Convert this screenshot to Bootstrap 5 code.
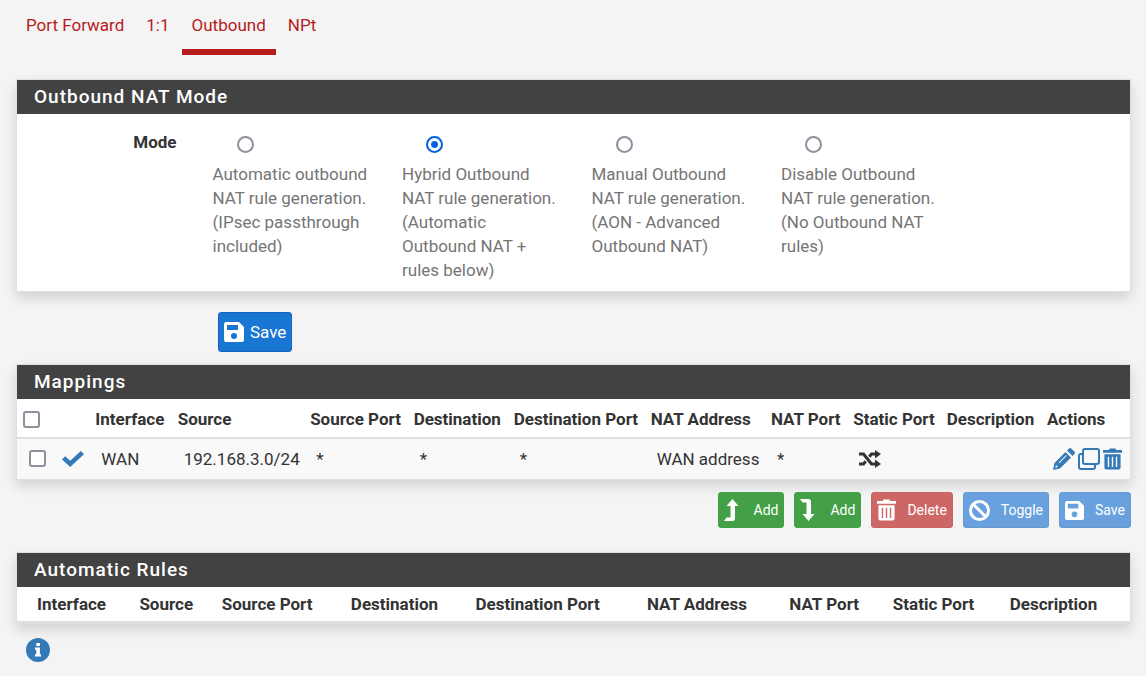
<!DOCTYPE html>
<html lang="en">
<head>
<meta charset="utf-8">
<meta name="viewport" content="width=device-width, initial-scale=1">
<title>Firewall: NAT: Outbound</title>
<link href="https://cdn.jsdelivr.net/npm/bootstrap@5.3.0/dist/css/bootstrap.min.css" rel="stylesheet">
<style>
  body { background: #f4f4f4; color: #333; font: 400 17px/24px Roboto, sans-serif; }
  .page { padding: 0 15px 0 16px; }
  .nat-tabs { margin-bottom: 24px; }
  .nat-tabs .nav-link { color: #b71c1c; padding: 13px 10px 12px; margin-right: 2px; line-height: 24px; border-bottom: 6px solid transparent; font-size: 17px; }
  .nat-tabs .nav-link.active { border-bottom-color: #b71c1c; }
  .panel { background: #fff; border: 1px solid #e0e0e0; box-shadow: 0 6px 12px rgba(0,0,0,.14); }
  .panel-title { background: #424242; color: #fff; font-size: 19px; font-weight: 500; line-height: 24px; letter-spacing: 1px; padding: 5px 17px; margin: 0; }
  input[type=radio], input[type=checkbox] { appearance: none; width: 17px; height: 17px; border: 2px solid #8f8f9d; background: #fff; margin: 0; flex: none; }
  input[type=radio] { border-radius: 50%; }
  input[type=checkbox] { border-radius: 3px; display: block; }
  input[type=radio]:checked { border-color: #0060df; background: radial-gradient(circle, #0060df 3px, #fff 4px); }
  .mode-body { padding: 16px 6px 9px; }
  .mode-body .row { --bs-gutter-x: 36px; }
  .mode-name { font-weight: 700; text-align: right; }
  .mode-option input[type=radio] { display: block; margin: 6px 0 9px 24px; }
  .mode-option label { color: #757575; display: block; margin-right: -6px; }
  svg { display: block; flex: none; }
  .save-row { margin: 20px 0 12px 202px; }
  .btn { --bs-btn-color: #fff; --bs-btn-hover-color: #fff; border-radius: 3px; display: inline-flex; align-items: center; }
  .btn-main { background: #1976d2; border: 1px solid #1565c0; padding: 7px 5px; font-size: 17px; line-height: 24px; gap: 6px; }
  .btn-row { background: #43a047; border: 1px solid #43a047; padding: 6px 5px; font-size: 14px; line-height: 20px; gap: 11px; }
  .btn-row.is-blue { background: #68a1de; border-color: #6899cc; }
  .btn-row.is-red { background: #cd6766; border-color: #c96362; }
  .row-actions { gap: 10px; margin: 12px 0 24px; }
  .rules { table-layout: fixed; width: 100%; white-space: nowrap; line-height: 24px; }
  .rules th { padding: 8px 6px 6px; font-weight: 700; border-bottom: 2px solid #e0e0e0; }
  .rules td { padding: 7px 12px 8px; background: #f9f9f9; height: 41px; }
  .mappings col:nth-child(1) { width: 3.5%; }
  .mappings col:nth-child(2) { width: 3%; }
  .mappings col:nth-child(3) { width: 7.4%; }
  .mappings col:nth-child(4) { width: 11.9%; }
  .mappings col:nth-child(5) { width: 9.3%; }
  .mappings col:nth-child(6) { width: 9%; }
  .mappings col:nth-child(7) { width: 12.3%; }
  .mappings col:nth-child(8) { width: 10.8%; }
  .mappings col:nth-child(9) { width: 7.4%; }
  .mappings col:nth-child(10) { width: 8.4%; }
  .mappings col:nth-child(11) { width: 9%; }
  .mappings .state { padding-left: 6px; padding-right: 0; }
  .icon-set { gap: 3px; }
  .rules.automatic th { padding: 5px 0 5px 20px; }
  .automatic col:nth-child(1) { width: 9.2%; }
  .automatic col:nth-child(2) { width: 7.4%; }
  .automatic col:nth-child(3) { width: 11.6%; }
  .automatic col:nth-child(4) { width: 11.2%; }
  .automatic col:nth-child(5) { width: 15.4%; }
  .automatic col:nth-child(6) { width: 12.8%; }
  .automatic col:nth-child(7) { width: 9.3%; }
  .automatic col:nth-child(8) { width: 10.5%; }
  .tool { color: #337ab7; }
  .info-link { display: inline-block; margin: 14px 0 12px 10px; }
</style>
</head>
<body>
<svg class="d-none" aria-hidden="true">
  <symbol id="i-save" viewBox="0 0 20 20"><path fill="currentColor" fill-rule="evenodd" d="M2 0h13l5 5v13a2 2 0 0 1-2 2H2a2 2 0 0 1-2-2V2a2 2 0 0 1 2-2zM3 3v5h11V3zM10 11a3 3 0 1 0 0 6a3 3 0 0 0 0-6z"/></symbol>
  <symbol id="i-trash" viewBox="0 0 20 22"><path fill="currentColor" fill-rule="evenodd" d="M7 0h6l1 1.500h6v3H0v-3h6zM1.500 6h17v14a2 2 0 0 1-2 2h-13a2 2 0 0 1-2-2zM5 8.500v11h1.500v-11zM9.250 8.500v11h1.500v-11zM13.500 8.500v11H15v-11z"/></symbol>
</svg>
<main class="page">
  <ul class="nav nat-tabs">
    <li class="nav-item"><a class="nav-link" href="#">Port Forward</a></li>
    <li class="nav-item"><a class="nav-link" href="#">1:1</a></li>
    <li class="nav-item"><a class="nav-link active" aria-current="page" href="#">Outbound</a></li>
    <li class="nav-item"><a class="nav-link" href="#">NPt</a></li>
  </ul>

  <form>
    <section class="panel">
      <h2 class="panel-title">Outbound NAT Mode</h2>
      <div class="mode-body">
        <div class="row" role="radiogroup" aria-labelledby="mode">
          <div class="col-2 mode-name" id="mode">Mode</div>
          <div class="col-2 mode-option"><input type="radio" name="mode" id="m1"><label for="m1">Automatic outbound NAT rule generation.<br>(IPsec passthrough included)</label></div>
          <div class="col-2 mode-option"><input type="radio" name="mode" id="m2" checked><label for="m2">Hybrid Outbound NAT rule generation.<br>(Automatic Outbound NAT + rules below)</label></div>
          <div class="col-2 mode-option"><input type="radio" name="mode" id="m3"><label for="m3">Manual Outbound NAT rule generation.<br>(AON - Advanced Outbound NAT)</label></div>
          <div class="col-2 mode-option"><input type="radio" name="mode" id="m4"><label for="m4">Disable Outbound NAT rule generation.<br>(No Outbound NAT rules)</label></div>
        </div>
      </div>
    </section>
    <div class="save-row">
      <button type="button" class="btn btn-main"><svg width="20" height="20"><use href="#i-save"/></svg>Save</button>
    </div>
  </form>

  <form>
    <section class="panel">
      <h2 class="panel-title">Mappings</h2>
      <table class="rules mappings">
        <colgroup><col><col><col><col><col><col><col><col><col><col><col><col></colgroup>
        <thead>
          <tr>
            <th><input type="checkbox" aria-label="Select all"></th><th></th><th>Interface</th><th>Source</th><th>Source Port</th><th>Destination</th><th>Destination Port</th><th>NAT Address</th><th>NAT Port</th><th>Static Port</th><th>Description</th><th>Actions</th>
          </tr>
        </thead>
        <tbody>
          <tr>
            <td><input type="checkbox" aria-label="Select rule"></td>
            <td class="state"><a class="tool" href="#" aria-label="Enabled"><svg width="22" height="16" viewBox="0 0 22 16"><path fill="currentColor" d="M0 8.500 3.200 5.300 8.200 9.800 18.800 0 22 3.200 8.200 16z"/></svg></a></td>
            <td>WAN</td><td>192.168.3.0/24</td><td>*</td><td>*</td><td>*</td><td>WAN address</td><td>*</td>
            <td><svg width="22" height="18" viewBox="0 0 22 18" role="img" aria-label="Randomized port"><path fill="none" stroke="currentColor" stroke-width="3" d="M0 4h4.500l8 10H17M0 14h4.500l2.200-2.700M10.300 6.700 12.500 4H17"/><path fill="currentColor" d="M16 0 22 4 16 8.500zM16 9.500 22 14 16 18z"/></svg></td>
            <td></td>
            <td>
              <div class="d-flex icon-set">
                <a class="tool" href="#" aria-label="Edit"><svg width="22" height="22" viewBox="0 0 22 22"><path fill="currentColor" fill-rule="evenodd" d="M0 22 1.500 15 12.500 4 18 9.500 7 20.500zM2.300 19.700 5 19 3 17zM5.600 14.600 6.300 15.300 13.800 7.800 13.100 7.100zM14 2.500 16.200.4a1.500 1.500 0 0 1 2 0L21.600 3.800a1.500 1.500 0 0 1 0 2L19.500 8z"/></svg></a>
                <a class="tool" href="#" aria-label="Copy"><svg width="22" height="22" viewBox="0 0 22 22"><g fill="none" stroke="currentColor" stroke-width="2"><rect x="5" y="1" width="16" height="15" rx="2"/><path d="M4 6H3a2 2 0 0 0-2 2v11a2 2 0 0 0 2 2h12a2 2 0 0 0 2-2v-2"/></g></svg></a>
                <a class="tool" href="#" aria-label="Delete"><svg width="19" height="22"><use href="#i-trash"/></svg></a>
              </div>
            </td>
          </tr>
        </tbody>
      </table>
    </section>
    <div class="d-flex flex-wrap justify-content-end row-actions">
      <button type="button" class="btn btn-row"><svg width="15" height="22" viewBox="0 0 15 22"><path fill="currentColor" d="M8.500 0 14.500 7H11v12.500a2.500 2.500 0 0 1-2.500 2.500H0l2.500-3.500H6.500V7H2.500z"/></svg><span class="ps-1">Add</span></button>
      <button type="button" class="btn btn-row"><svg width="15" height="22" viewBox="0 0 15 22"><path fill="currentColor" d="M8.500 22 14.500 15H11V2.500A2.500 2.500 0 0 0 8.500 0H0l2.500 3.500H6.500V15H2.500z"/></svg><span class="ps-1">Add</span></button>
      <button type="button" class="btn btn-row is-red"><svg width="19" height="22"><use href="#i-trash"/></svg>Delete</button>
      <button type="button" class="btn btn-row is-blue"><svg width="21" height="21" viewBox="0 0 21 21"><g fill="none" stroke="currentColor" stroke-width="3"><circle cx="10.500" cy="10.500" r="9"/><path d="M4 4 17 17"/></g></svg>Toggle</button>
      <button type="button" class="btn btn-row is-blue"><svg width="19" height="19"><use href="#i-save"/></svg>Save</button>
    </div>
  </form>

  <section class="panel">
    <h2 class="panel-title">Automatic Rules</h2>
    <table class="rules automatic">
      <colgroup><col><col><col><col><col><col><col><col><col></colgroup>
      <thead>
        <tr><th>Interface</th><th>Source</th><th>Source Port</th><th>Destination</th><th>Destination Port</th><th>NAT Address</th><th>NAT Port</th><th>Static Port</th><th>Description</th></tr>
      </thead>
    </table>
  </section>
  <a class="tool info-link" href="#" aria-label="Information"><svg width="24" height="24" viewBox="0 0 24 24"><circle cx="12" cy="12" r="12" fill="currentColor"/><path fill="#fff" d="M10.300 5h3.600v3h-3.600zM9 9.500h4.900v6.800H15V18.500H9v-2.200h1.300v-4.600H9z"/></svg></a>
</main>
<script src="https://cdn.jsdelivr.net/npm/bootstrap@5.3.0/dist/js/bootstrap.bundle.min.js"></script>
</body>
</html>
